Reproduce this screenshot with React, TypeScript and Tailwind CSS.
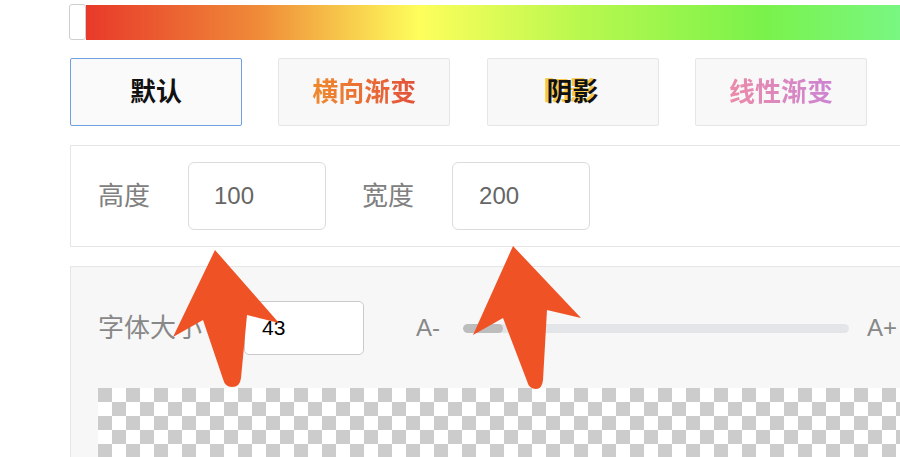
export default function App() {
  const btn =
    "w-[172px] h-[68px] shrink-0 flex items-center justify-center text-[26px] font-bold border rounded-[2px]";
  return (
    <div className="relative w-[900px] h-[457px] overflow-hidden bg-white font-['Liberation_Sans','Noto_Sans_CJK_SC',sans-serif]">
      {/* gradient bar */}
      <div className="flex pt-[5px] pl-[69px]">
        <div className="w-[17px] h-[36px] -mt-[1px] bg-white border border-[#cfcfcf] rounded-[3px] shrink-0" />
        <div className="h-[35px] w-[900px] shrink-0 bg-[linear-gradient(90deg,#e8392a_0%,#ef8a38_19%,#fefe5c_37%,#b8f84e_55%,#7af24a_75%,#78f9a4_100%)]" />
      </div>

      {/* buttons */}
      <div className="mt-[18px] pl-[70px] flex gap-[36.3px]">
        <div className={`${btn} bg-[#fafafa] border-[#6fa1e2] border-[1.5px] text-[#111]`}>默认</div>
        <div className={`${btn} bg-[#f8f8f8] border-[#e6e6e6]`}>
          <span className="bg-gradient-to-r from-[#ef8a2c] to-[#e2503a] bg-clip-text text-transparent">横向渐变</span>
        </div>
        <div className={`${btn} bg-[#f8f8f8] border-[#e6e6e6] text-[#111]`}>
          <span className="[text-shadow:-3px_-1px_0_#f6c644]">阴影</span>
        </div>
        <div className={`${btn} bg-[#f8f8f8] border-[#e6e6e6]`}>
          <span className="bg-gradient-to-r from-[#ec8aa8] to-[#cc84d2] bg-clip-text text-transparent">线性渐变</span>
        </div>
      </div>

      {/* size panel */}
      <div className="mt-[19px] ml-[70px] w-[900px] h-[102px] border border-[#e6e6e6] flex items-center pl-[27px]">
        <span className="text-[26px] text-[#808080]">高度</span>
        <div className="ml-[38px] w-[138px] h-[68px] border border-[#dcdcdc] rounded-[6px] flex items-center pl-[25px] text-[24px] text-[#666]">100</div>
        <span className="ml-[36px] text-[26px] text-[#808080]">宽度</span>
        <div className="ml-[38px] w-[138px] h-[68px] border border-[#dcdcdc] rounded-[6px] flex items-center pl-[26px] text-[24px] text-[#666]">200</div>
      </div>

      {/* font panel */}
      <div className="mt-[19px] ml-[70px] w-[900px] h-[300px] border border-[#e6e6e6] bg-[#f7f7f7] pt-[34px] pl-[27px]">
        <div className="flex items-center h-[54px]">
          <span className="text-[26px] text-[#888]">字体大小</span>
          <div className="ml-[42px] w-[120px] h-[54px] bg-white border border-[#cacaca] rounded-[5px] flex items-center pl-[17px] text-[21px] text-black">43</div>
          <span className="ml-[52px] text-[24px] text-[#888]">A-</span>
          <div className="ml-[23px] w-[386px] h-[9px] rounded-full bg-[#e3e5e9] overflow-hidden">
            <div className="w-[40px] h-full rounded-full bg-[#bdbdbd]" />
          </div>
          <span className="ml-[18px] text-[24px] text-[#888]">A+</span>
        </div>
        <div className="mt-[33px] h-[120px] w-[900px] bg-[conic-gradient(#fff_25%,#cccccc_0_50%,#fff_0_75%,#cccccc_0)] bg-[length:28px_28px]" />
      </div>

      {/* arrows overlay */}
      <svg className="absolute inset-0 pointer-events-none" width="900" height="457" viewBox="0 0 900 457">
        <path d="M215,250 L279,323 L247,315 L241,378 Q240,387 232,387 Q225,387 223,379 L203,320 L173,337 Z" fill="#ef5225" />
        <path d="M513,246 L581,318 L547,310 L543,380 Q542,389 536,389 Q529,389 527,381 L503,318 L473,335 Z" fill="#ef5225" />
      </svg>
    </div>
  );
}
